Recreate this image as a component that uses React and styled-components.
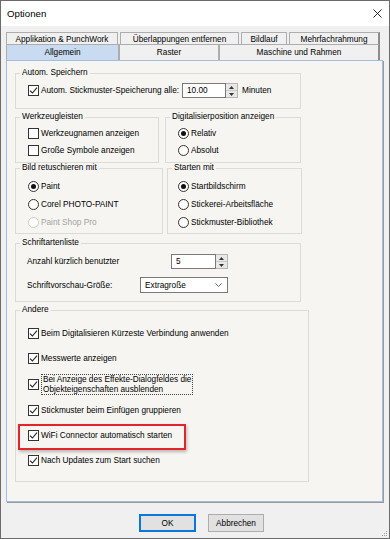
import React from "react";
import styled, { createGlobalStyle } from "styled-components";

const GlobalStyle = createGlobalStyle`
  html, body {
    margin: 0;
    padding: 0;
    background: #fff;
  }
  body {
    font-family: "Liberation Sans", Arial, sans-serif;
    font-size: 8.25px;
    color: #000;
  }
  * {
    box-sizing: border-box;
  }
`;

const Window = styled.div`
  position: relative;
  width: 390px;
  height: 539px;
  border: 1px solid #6b6b6b;
  background: #f0f0f0;
  display: flex;
  flex-direction: column;
`;

const TitleBar = styled.div`
  height: 25px;
  flex-shrink: 0;
  background: #fff;
  display: flex;
  align-items: center;
  justify-content: space-between;
  padding: 0 7px 0 6px;
  font-size: 9.7px;
  color: #000;
`;

const Body = styled.div`
  flex: 1;
  display: flex;
  flex-direction: column;
  padding: 6px 0 0 5px;
`;

const TabRow = styled.div`
  display: flex;
  gap: ${(p) => p.gap || 0}px;
  height: ${(p) => p.h}px;
  padding-left: ${(p) => p.indent || 0}px;
`;

const Tab = styled.div`
  width: ${(p) => p.w}px;
  height: 100%;
  display: flex;
  align-items: center;
  justify-content: center;
  padding-top: ${(p) => p.pt || 0}px;
  border: 1px solid #adadad;
  border-bottom: none;
  border-right: ${(p) => (p.last ? "2px solid #8c8c8c" : "1px solid #adadad")};
  background: ${(p) => (p.active ? "#c8dbf1" : "#f0f0f0")};
  white-space: nowrap;
`;

const Panel = styled.div`
  width: 377px;
  height: 442px;
  background: #f6f5f2;
  border: 1px solid #a3bde0;
  box-shadow: 1px 1px 0 #9a9a9a;
  padding: 7px 0 0 8px;
  display: flex;
  flex-direction: column;
`;

const GroupRow = styled.div`
  display: flex;
  gap: ${(p) => p.gap}px;
  margin-top: ${(p) => p.mt || 0}px;
`;

const Group = styled.fieldset`
  margin: ${(p) => p.mt || 0}px 0 0 0;
  padding: 0;
  width: ${(p) => p.w}px;
  height: ${(p) => p.h}px;
  border: 1px solid #dddbd6;
  min-width: 0;
`;

const Legend = styled.legend`
  margin-left: 4px;
  padding: 0 2px;
  line-height: 10px;
  font-size: 8.25px;
`;

const GroupBody = styled.div`
  display: flex;
  flex-direction: column;
  gap: ${(p) => p.gap || 0}px;
  padding: ${(p) => p.pt || 0}px 0 0 ${(p) => (p.pl == null ? 12 : p.pl)}px;
`;

const Option = styled.div`
  position: relative;
  display: flex;
  align-items: center;
  gap: 2px;
  height: ${(p) => p.h || 13}px;
  color: ${(p) => (p.disabled ? "#a3a3a3" : "inherit")};
  white-space: nowrap;

  ${(p) =>
    p.highlight &&
    `
    &::after {
      content: "";
      position: absolute;
      left: -10px;
      top: ${p.hlTop}px;
      width: 164px;
      height: 22px;
      border: 2px solid #e0252b;
      box-shadow: 1px 2px 3px rgba(0, 0, 0, 0.25);
    }
  `}
`;

const Box = styled.span`
  flex-shrink: 0;
  width: 11px;
  height: 11px;
  border: 1px solid #333;
  background: #fff;
  display: flex;
  align-items: center;
  justify-content: center;
`;

const RadioDot = styled.span`
  flex-shrink: 0;
  width: 11px;
  height: 11px;
  border-radius: 50%;
  border: 1px solid ${(p) => (p.disabled ? "#cdcdcd" : "#333")};
  background: #fff;
  display: flex;
  align-items: center;
  justify-content: center;

  &::after {
    content: "";
    width: 5px;
    height: 5px;
    border-radius: 50%;
    background: #111;
    display: ${(p) => (p.checked ? "block" : "none")};
  }
`;

const FocusText = styled.span`
  border: 1px dotted #444;
  padding: 0 1px;
  line-height: 9.6px;
`;

const Field = styled.div`
  display: flex;
  align-items: center;
  height: ${(p) => p.h || 15}px;
`;

const FieldLabel = styled.span`
  width: ${(p) => p.w}px;
  flex-shrink: 0;
  white-space: nowrap;
`;

const Spin = styled.div`
  display: flex;
  height: 15px;
  margin-left: ${(p) => p.ml || 0}px;
`;

const SpinInput = styled.div`
  width: ${(p) => p.w}px;
  border: 1px solid #7a7a7a;
  background: #fff;
  padding-left: 4px;
  display: flex;
  align-items: center;
`;

const SpinButtons = styled.div`
  width: 12px;
  display: flex;
  flex-direction: column;
  border: 1px solid #b5b5b5;
  border-left: none;
  background: #e8e8e8;
`;

const SpinBtn = styled.div`
  flex: 1;
  display: flex;
  align-items: center;
  justify-content: center;
  & + & {
    border-top: 1px solid #c9c9c9;
  }
`;

const Suffix = styled.span`
  margin-left: 4px;
`;

const Combo = styled.div`
  width: 88px;
  height: 16px;
  border: 1px solid #7a7a7a;
  background: #fff;
  display: flex;
  align-items: center;
  justify-content: space-between;
  padding: 0 5px 0 4px;
`;

const ButtonBar = styled.div`
  display: flex;
  justify-content: flex-end;
  gap: 12px;
  padding: 12px 125px 0 0;
`;

const Button = styled.div`
  width: ${(p) => p.w}px;
  height: 18px;
  display: flex;
  align-items: center;
  justify-content: center;
  background: #e1e1e1;
  border: 1px solid ${(p) => (p.primary ? "#0a78d4" : "#adadad")};
  box-shadow: ${(p) => (p.primary ? "inset 0 0 0 1px #0a78d4" : "none")};
`;

const Grip = styled.svg`
  position: absolute;
  right: 1px;
  bottom: 1px;
`;

const Check = () => (
  <svg width="9" height="9" viewBox="0 0 9 9">
    <path d="M1 4.6 L3.4 7 L8 1.6" fill="none" stroke="#222" strokeWidth="1.1" />
  </svg>
);

const CheckBox = ({ checked, children, ...rest }) => (
  <Option {...rest}>
    <Box>{checked && <Check />}</Box>
    {children}
  </Option>
);

const Radio = ({ checked, disabled, children }) => (
  <Option disabled={disabled}>
    <RadioDot checked={checked} disabled={disabled} />
    {children}
  </Option>
);

const Arrow = ({ up }) => (
  <svg width="5" height="3" viewBox="0 0 5 3">
    <path d={up ? "M0 3 L2.5 0 L5 3 Z" : "M0 0 L2.5 3 L5 0 Z"} fill="#333" />
  </svg>
);

const Spinner = ({ value, w, ml }) => (
  <Spin ml={ml}>
    <SpinInput w={w}>{value}</SpinInput>
    <SpinButtons>
      <SpinBtn>
        <Arrow up />
      </SpinBtn>
      <SpinBtn>
        <Arrow />
      </SpinBtn>
    </SpinButtons>
  </Spin>
);

const App = () => {
  return (
    <>
      <GlobalStyle />
      <Window>
        <TitleBar>
          <span>Optionen</span>
          <svg width="9" height="9" viewBox="0 0 9 9">
            <path d="M0.5 0.5 L8.5 8.5 M8.5 0.5 L0.5 8.5" stroke="#111" strokeWidth="0.9" />
          </svg>
        </TitleBar>
        <Body>
          <TabRow h={12} gap={2}>
            <Tab w={112} pt={1}>Applikation &amp; PunchWork</Tab>
            <Tab w={119} pt={1}>Überlappungen entfernen</Tab>
            <Tab w={46} pt={1}>Bildlauf</Tab>
            <Tab w={91} pt={1} last>
              Mehrfachrahmung
            </Tab>
          </TabRow>
          <TabRow h={16}>
            <Tab w={113} active>
              Allgemein
            </Tab>
            <Tab w={100}>Raster</Tab>
            <Tab w={161} last>
              Maschine und Rahmen
            </Tab>
          </TabRow>
          <Panel>
            <Group w={286} h={41}>
              <Legend>Autom. Speichern</Legend>
              <GroupBody pt={5}>
                <Field>
                  <CheckBox checked>Autom. Stickmuster-Speicherung alle:</CheckBox>
                  <Spinner value="10.00" w={44} ml={3} />
                  <Suffix>Minuten</Suffix>
                </Field>
              </GroupBody>
            </Group>

            <GroupRow gap={6} mt={3}>
              <Group w={144} h={51}>
                <Legend>Werkzeugleisten</Legend>
                <GroupBody pt={5} gap={4}>
                  <CheckBox>Werkzeugnamen anzeigen</CheckBox>
                  <CheckBox>Große Symbole anzeigen</CheckBox>
                </GroupBody>
              </Group>
              <Group w={136} h={51}>
                <Legend>Digitalisierposition anzeigen</Legend>
                <GroupBody pt={5} gap={4}>
                  <Radio checked>Relativ</Radio>
                  <Radio>Absolut</Radio>
                </GroupBody>
              </Group>
            </GroupRow>

            <GroupRow gap={4}>
              <Group w={148} h={71}>
                <Legend>Bild retuschieren mit</Legend>
                <GroupBody pt={7} gap={5}>
                  <Radio checked>Paint</Radio>
                  <Radio>Corel PHOTO-PAINT</Radio>
                  <Radio disabled>Paint Shop Pro</Radio>
                </GroupBody>
              </Group>
              <Group w={135} h={71}>
                <Legend>Starten mit</Legend>
                <GroupBody pt={7} gap={5} pl={10}>
                  <Radio checked>Startbildschirm</Radio>
                  <Radio>Stickerei-Arbeitsfläche</Radio>
                  <Radio>Stickmuster-Bibliothek</Radio>
                </GroupBody>
              </Group>
            </GroupRow>

            <Group w={286} h={64} mt={4}>
              <Legend>Schriftartenliste</Legend>
              <GroupBody pt={6} gap={8} pl={11}>
                <Field>
                  <FieldLabel w={144}>Anzahl kürzlich benutzter</FieldLabel>
                  <Spinner value="5" w={45} />
                </Field>
                <Field h={16}>
                  <FieldLabel w={113}>Schriftvorschau-Größe:</FieldLabel>
                  <Combo>
                    <span>Extragroße</span>
                    <svg width="7" height="4" viewBox="0 0 7 4">
                      <path d="M0.5 0.5 L3.5 3.5 L6.5 0.5" fill="none" stroke="#555" strokeWidth="0.9" />
                    </svg>
                  </Combo>
                </Field>
              </GroupBody>
            </Group>

            <Group w={294} h={177} mt={3}>
              <Legend>Andere</Legend>
              <GroupBody pt={6}>
                <CheckBox checked h={25}>
                  Beim Digitalisieren Kürzeste Verbindung anwenden
                </CheckBox>
                <CheckBox checked h={25}>
                  Messwerte anzeigen
                </CheckBox>
                <CheckBox checked h={27}>
                  <FocusText>
                    Bei Anzeige des Effekte-Dialogfeldes die
                    <br />
                    Objekteigenschaften ausblenden
                  </FocusText>
                </CheckBox>
                <CheckBox checked h={25}>
                  Stickmuster beim Einfügen gruppieren
                </CheckBox>
                <CheckBox checked h={25} highlight hlTop={1}>
                  WiFi Connector automatisch starten
                </CheckBox>
                <CheckBox checked h={25}>
                  Nach Updates zum Start suchen
                </CheckBox>
              </GroupBody>
            </Group>
          </Panel>
          <ButtonBar>
            <Button w={57} primary>
              OK
            </Button>
            <Button w={56}>Abbrechen</Button>
          </ButtonBar>
        </Body>
        <Grip width="7" height="7" viewBox="0 0 7 7">
          <rect x="5" y="1" width="1" height="1" fill="#9a9a9a" />
          <rect x="3" y="3" width="1" height="1" fill="#9a9a9a" />
          <rect x="5" y="3" width="1" height="1" fill="#9a9a9a" />
          <rect x="1" y="5" width="1" height="1" fill="#9a9a9a" />
          <rect x="3" y="5" width="1" height="1" fill="#9a9a9a" />
          <rect x="5" y="5" width="1" height="1" fill="#9a9a9a" />
        </Grip>
      </Window>
    </>
  );
};

export default App;
